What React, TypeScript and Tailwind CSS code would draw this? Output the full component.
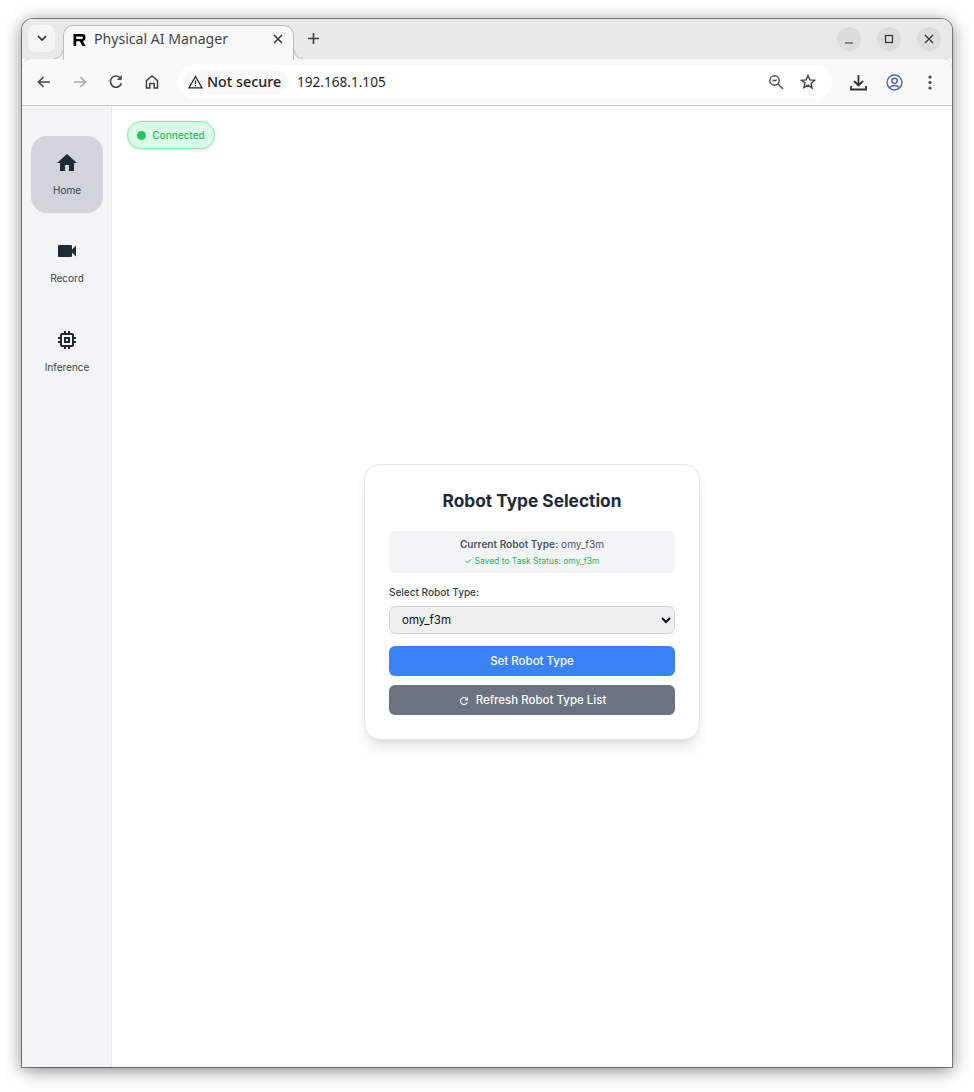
import React from "react";
import { MdHome, MdVideocam, MdMemory, MdRefresh } from "react-icons/md";

const ui = { fontFamily: '"Noto Sans", "Open Sans", sans-serif' };
const inter = { fontFamily: 'Inter, "Liberation Sans", sans-serif' };

function Tb({ children, cls = "" }: { children: React.ReactNode; cls?: string }) {
  return <div className={"w-9 h-9 flex items-center justify-center " + cls}>{children}</div>;
}

function WinBtn({ children }: { children: React.ReactNode }) {
  return <div className="w-6 h-6 rounded-full bg-[#dcdcdc] flex items-center justify-center">{children}</div>;
}

function NavItem({ icon, label, active }: { icon: React.ReactNode; label: string; active?: boolean }) {
  return (
    <div className={"w-[72px] h-[77px] pb-[2px] rounded-2xl flex flex-col items-center justify-center gap-[8px] " + (active ? "bg-[#d1d5db]" : "")}>
      {icon}
      <span className="text-[10px] leading-[14px] text-[#374151]">{label}</span>
    </div>
  );
}

export default function App() {
  return (
    <div className="w-[974px] h-[1092px] bg-white pt-[19px] pl-[22px]">
      <div className="w-[930px] h-[1048px] rounded-t-[11px] overflow-hidden bg-white flex flex-col shadow-[0_3px_17px_rgba(0,0,0,0.5),0_0_0_1px_#8f8f8f]">
        {/* tab strip */}
        <div className="h-[40px] bg-[#e9e9e9] flex items-start relative shrink-0" style={ui}>
          <div className="w-[27px] h-[27px] ml-[6px] mt-[6px] rounded-lg bg-[#f6f6f6] flex items-center justify-center">
            <svg width="10" height="7" viewBox="0 0 10 7" fill="none" stroke="#2b2b2b" strokeWidth="1.7"><path d="M1 1l4 4 4-4" /></svg>
          </div>
          {/* tab */}
          <div className="relative ml-[8px] mt-[6px] w-[231px] h-[35px] bg-[#f9f9f9] rounded-t-[10px] border border-b-0 border-[#bdbdbd] flex items-center pl-[8px] pb-[7px] z-10">
            <svg className="absolute -left-[10px] bottom-px" width="9" height="9" viewBox="0 0 9 9"><path d="M0 9Q9 9 9 0V9Z" fill="#f9f9f9" /><path d="M0 8.500Q8.500 8.500 8.500 0" fill="none" stroke="#bdbdbd" /></svg>
            <svg className="absolute -right-[10px] bottom-px" width="9" height="9" viewBox="0 0 9 9"><path d="M9 9Q0 9 0 0V9Z" fill="#f9f9f9" /><path d="M9 8.500Q0.500 8.500 0.500 0" fill="none" stroke="#bdbdbd" /></svg>
            <div className="w-[14px] h-[14px] bg-white flex items-center justify-center">
              <svg width="13" height="12" viewBox="0 0 13 12"><path d="M0.500 0H9.500Q12.500 0 12.500 3.200V4.200Q12.500 6.800 10 7.200L12.700 12H9.400L6.800 7.300H3.200V12H0.500V2.500H3.200V5H9Q9.800 5 9.800 4V3.400Q9.800 2.400 9 2.400H0.500Z" fill="#000" /></svg>
            </div>
            <span className="ml-[8px] text-[14.100px] text-[#454545] whitespace-nowrap leading-none">Physical AI Manager</span>
            <svg className="absolute left-[209px] top-[8px]" width="10" height="10" viewBox="0 0 10 10" stroke="#3a3a3a" strokeWidth="1.6"><path d="M1 1l8 8M9 1l-8 8" /></svg>
          </div>
          <svg className="ml-[14px] mt-[14px]" width="11" height="11" viewBox="0 0 11 11" stroke="#3f3f3f" strokeWidth="1.6"><path d="M5.500 0v11M0 5.500h11" /></svg>
          <div className="ml-auto mr-[11px] mt-[8px] flex gap-4">
            <WinBtn><svg width="10" height="10" viewBox="0 0 10 10" stroke="#333" strokeWidth="1.2"><path d="M1 9h8" /></svg></WinBtn>
            <WinBtn><svg width="10" height="10" viewBox="0 0 10 10" fill="none" stroke="#333" strokeWidth="1.2"><rect x="1.500" y="1.500" width="7" height="7" /></svg></WinBtn>
            <WinBtn><svg width="10" height="10" viewBox="0 0 10 10" stroke="#333" strokeWidth="1.2"><path d="M1 1l8 8M9 1l-8 8" /></svg></WinBtn>
          </div>
        </div>
        {/* toolbar */}
        <div className="h-[48px] bg-[#f9f9f9] border-t border-b border-t-[#c4c4c4] border-b-[#c8c8c8] -mt-px rounded-t-[9px] flex items-center pl-[4px] pr-[4px] shrink-0" style={ui}>
          <Tb><svg width="16" height="16" viewBox="0 0 16 16" fill="none" stroke="#444" strokeWidth="1.6"><path d="M14 8H2.500M7.500 3 2.500 8l5 5" /></svg></Tb>
          <Tb><svg width="16" height="16" viewBox="0 0 16 16" fill="none" stroke="#a9a9a9" strokeWidth="1.6"><path d="M2 8h11.500M8.500 3l5 5-5 5" /></svg></Tb>
          <Tb><svg width="16" height="16" viewBox="0 0 16 16" fill="none" stroke="#444" strokeWidth="1.6"><path d="M13.400 9.200A5.600 5.600 0 1 1 12 3.700" /><path d="M13.400 1.500v4h-4" fill="#444" strokeWidth="0.8" /></svg></Tb>
          <Tb><svg width="16" height="16" viewBox="0 0 16 16" fill="none" stroke="#444" strokeWidth="1.5"><path d="M2.500 14V6.600L8 2l5.500 4.600V14h-3.300V9.500H5.800V14Z" /></svg></Tb>
          <div className="ml-[8px] w-[654px] h-[34px] rounded-[17px] bg-white flex items-center pl-[5px] pr-[16px]">
            <div className="h-[24px] w-[105px] rounded-xl bg-[#f8f8f8] flex items-center pl-[5px] gap-[4px]">
              <svg width="15" height="14" viewBox="0 0 15 14" fill="none" stroke="#222" strokeWidth="1.3"><path d="M7.500 1.500 14 12.800H1Z" /><path d="M7.500 5.500V9M7.500 10v1.200" /></svg>
              <span className="text-[14.300px] font-medium text-[#1f1f1f] whitespace-nowrap leading-none">Not secure</span>
            </div>
            <span className="ml-[9px] text-[13.600px] text-[#1f1f1f] leading-none">192.168.1.105</span>
            <div className="ml-auto flex items-center gap-[16px]">
              <svg width="16" height="16" viewBox="0 0 16 16" fill="none" stroke="#4a4a4a" strokeWidth="1.4"><circle cx="6.500" cy="6.500" r="4.700" /><path d="M10 10l5 5M4.500 6.500h4" /></svg>
              <svg width="16" height="16" viewBox="0 0 16 16" fill="none" stroke="#444" strokeWidth="1.4"><path d="M8 1.500l1.900 4.400 4.700.4-3.600 3.100 1.100 4.700L8 11.100l-4.100 2.500L5 8.900 1.400 6.300l4.700-.4Z" /></svg>
            </div>
          </div>
          <Tb cls="ml-[8px]"><svg width="17" height="17" viewBox="0 0 17 17" fill="none" stroke="#333" strokeWidth="1.800"><path d="M8.500 1v10M4 7l4.500 4.500L13 7M1 12v3.500h15V12" /></svg></Tb>
          <Tb><svg width="17" height="17" viewBox="0 0 17 17" fill="none" stroke="#4a66a8" strokeWidth="1.400"><circle cx="8.500" cy="8.500" r="7.500" /><circle cx="8.500" cy="6.800" r="2.600" /><path d="M3.500 13.500Q8.500 9.500 13.500 13.500" /></svg></Tb>
          <Tb><svg width="4" height="15" viewBox="0 0 4 15" fill="#444"><circle cx="2" cy="2" r="1.600" /><circle cx="2" cy="7.500" r="1.600" /><circle cx="2" cy="13" r="1.600" /></svg></Tb>
        </div>
        {/* app body */}
        <div className="flex-1 flex min-h-0" style={inter}>
          <aside className="w-[90px] shrink-0 bg-[#f3f4f6] border-r border-[#e5e7eb] pt-[30px] pl-[9px] flex flex-col gap-[11.500px]">
            <NavItem active label="Home" icon={<MdHome className="text-[#1f2937]" size={24} />} />
            <NavItem label="Record" icon={<MdVideocam className="text-[#1f2937]" size={24} />} />
            <NavItem label="Inference" icon={<MdMemory className="text-[#1f2937]" size={24} />} />
          </aside>
          <main className="flex-1 flex flex-col pt-[15px] pb-[14px]">
            <div className="ml-[15px] mb-px self-start h-[28px] w-[88px] rounded-[14px] bg-[#dcfce7] border border-[#86efac] shadow-sm flex items-center justify-center gap-[6px] text-[10px] font-medium text-[#22c55e]">
              <span className="w-[9px] h-[9px] rounded-full bg-[#22c55e]" />
              Connected
            </div>
            <div className="flex-1 flex items-center justify-center">
              <div className="w-[336px] bg-white border border-[#e5e7eb] rounded-2xl shadow-lg px-6 pt-[25px] pb-6 flex flex-col">
                <h1 className="text-[17.300px] leading-[24px] font-bold text-[#1f2937] text-center mb-[18px] -mt-[1px]">Robot Type Selection</h1>
                <div className="h-[42px] rounded-md bg-[#f3f4f6] flex flex-col items-center justify-center pt-px">
                  <p className="text-[10.100px] leading-[16px] text-[#4b5563]"><b className="font-semibold">Current Robot Type:</b> omy_f3m</p>
                  <p className="text-[8.500px] leading-[14px] mt-[2px] text-[#22b45a]">✓ Saved to Task Status: omy_f3m</p>
                </div>
                <label className="mt-[12px] text-[10px] leading-[15px] font-medium text-[#374151]">Select Robot Type:</label>
                <select className="mt-[6px] h-[28px] w-full rounded-md border border-[#d1d5db] bg-[#efefef] pl-[8px] text-[11.500px] text-[#0b0f17]" defaultValue="omy_f3m">
                  <option>omy_f3m</option>
                </select>
                <button className="mt-[12px] h-[30px] pt-[2px] rounded-md bg-[#3b82f6] text-white text-[11.500px] font-medium">Set Robot Type</button>
                <button className="mt-[9px] h-[30px] pt-[2px] rounded-md bg-[#6b7280] text-white text-[11.500px] font-medium flex items-center justify-center gap-[6px]"><MdRefresh size={12} />Refresh Robot Type List</button>
              </div>
            </div>
          </main>
        </div>
      </div>
    </div>
  );
}
